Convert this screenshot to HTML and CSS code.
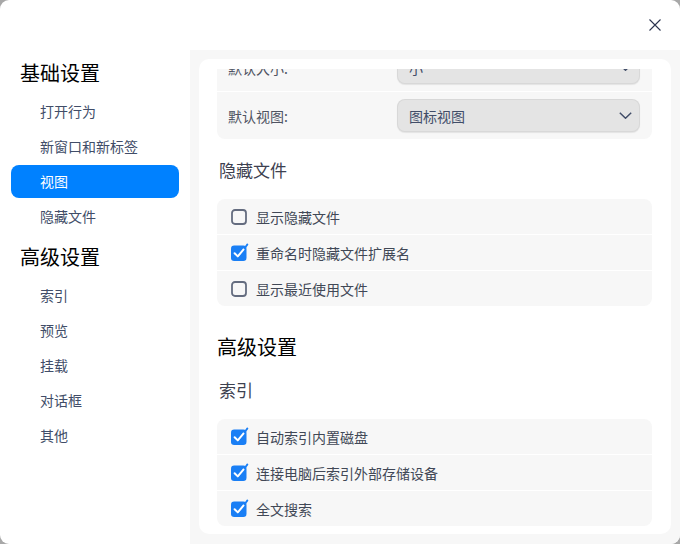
FILE: index.html
```html
<!DOCTYPE html>
<html lang="zh-CN">
<head>
<meta charset="utf-8">
<title>设置</title>
<link rel="stylesheet" href="styles.css">
</head>
<body>
<div class="window">
  <header class="titlebar">
    <button class="close" aria-label="关闭">
      <svg width="12" height="12" viewBox="0 0 12 12"><path d="M0.5 0.5 L11.5 11.5 M11.5 0.5 L0.5 11.5" stroke="#2c3550" stroke-width="1.1" fill="none"/></svg>
    </button>
  </header>
  <div class="main">
    <nav class="sidebar">
      <div class="nav-title">基础设置</div>
      <div class="nav-item">打开行为</div>
      <div class="nav-item">新窗口和新标签</div>
      <div class="nav-item active">视图</div>
      <div class="nav-item">隐藏文件</div>
      <div class="nav-title second">高级设置</div>
      <div class="nav-item">索引</div>
      <div class="nav-item">预览</div>
      <div class="nav-item">挂载</div>
      <div class="nav-item">对话框</div>
      <div class="nav-item">其他</div>
    </nav>
    <section class="panel">
      <div class="card">
        <div class="scroll">
          <div class="group first">
            <div class="row select-row">
              <span class="label">默认大小:</span>
              <div class="select"><span>小</span>
                <svg class="chev" width="13" height="7" viewBox="0 0 13 7"><path d="M0.8 0.8 L6.5 6.2 L12.2 0.8" stroke="#414d68" stroke-width="1.5" fill="none"/></svg>
              </div>
            </div>
            <div class="row select-row">
              <span class="label">默认视图:</span>
              <div class="select"><span>图标视图</span>
                <svg class="chev" width="13" height="7" viewBox="0 0 13 7"><path d="M0.8 0.8 L6.5 6.2 L12.2 0.8" stroke="#414d68" stroke-width="1.5" fill="none"/></svg>
              </div>
            </div>
          </div>

          <h3 class="sub-title">隐藏文件</h3>
          <div class="group">
            <div class="row check-row">
              <svg class="cb" width="16" height="16" viewBox="0 0 16 16"><rect x="1" y="1" width="14" height="14" rx="3" fill="none" stroke="#646c7f" stroke-width="1.8"/></svg>
              <span class="check-label">显示隐藏文件</span>
            </div>
            <div class="row check-row">
              <svg class="cb" width="16" height="16" viewBox="0 0 16 16"><rect x="0" y="0.5" width="15.5" height="15.5" rx="3.2" fill="#1a7ff5"/><path d="M3.6 8.2 L6.8 11.4 L12.6 4.4" stroke="#fff" stroke-width="2" fill="none" stroke-linecap="round" stroke-linejoin="round"/><path d="M13.6 3.2 L16.4 -0.6" stroke="#1a7ff5" stroke-width="1.8" stroke-linecap="round"/></svg>
              <span class="check-label">重命名时隐藏文件扩展名</span>
            </div>
            <div class="row check-row">
              <svg class="cb" width="16" height="16" viewBox="0 0 16 16"><rect x="1" y="1" width="14" height="14" rx="3" fill="none" stroke="#646c7f" stroke-width="1.8"/></svg>
              <span class="check-label">显示最近使用文件</span>
            </div>
          </div>

          <h2 class="section-title">高级设置</h2>
          <h3 class="sub-title">索引</h3>
          <div class="group">
            <div class="row check-row">
              <svg class="cb" width="16" height="16" viewBox="0 0 16 16"><rect x="0" y="0.5" width="15.5" height="15.5" rx="3.2" fill="#1a7ff5"/><path d="M3.6 8.2 L6.8 11.4 L12.6 4.4" stroke="#fff" stroke-width="2" fill="none" stroke-linecap="round" stroke-linejoin="round"/><path d="M13.6 3.2 L16.4 -0.6" stroke="#1a7ff5" stroke-width="1.8" stroke-linecap="round"/></svg>
              <span class="check-label">自动索引内置磁盘</span>
            </div>
            <div class="row check-row">
              <svg class="cb" width="16" height="16" viewBox="0 0 16 16"><rect x="0" y="0.5" width="15.5" height="15.5" rx="3.2" fill="#1a7ff5"/><path d="M3.6 8.2 L6.8 11.4 L12.6 4.4" stroke="#fff" stroke-width="2" fill="none" stroke-linecap="round" stroke-linejoin="round"/><path d="M13.6 3.2 L16.4 -0.6" stroke="#1a7ff5" stroke-width="1.8" stroke-linecap="round"/></svg>
              <span class="check-label">连接电脑后索引外部存储设备</span>
            </div>
            <div class="row check-row">
              <svg class="cb" width="16" height="16" viewBox="0 0 16 16"><rect x="0" y="0.5" width="15.5" height="15.5" rx="3.2" fill="#1a7ff5"/><path d="M3.6 8.2 L6.8 11.4 L12.6 4.4" stroke="#fff" stroke-width="2" fill="none" stroke-linecap="round" stroke-linejoin="round"/><path d="M13.6 3.2 L16.4 -0.6" stroke="#1a7ff5" stroke-width="1.8" stroke-linecap="round"/></svg>
              <span class="check-label">全文搜索</span>
            </div>
          </div>
        </div>
      </div>
    </section>
  </div>
</div>
</body>
</html>
```

FILE: styles.css
```css
* { box-sizing: border-box; }
html, body {
  margin: 0;
  padding: 0;
  background: #a8a8a8;
}
body {
  font-family: "Noto Sans CJK SC", "Noto Sans", sans-serif;
  width: 680px;
  height: 544px;
  overflow: hidden;
}
.window {
  width: 680px;
  height: 544px;
  background: #ffffff;
  border-radius: 9px;
  overflow: hidden;
  display: flex;
  flex-direction: column;
}
.titlebar {
  height: 50px;
  flex: none;
  display: flex;
  justify-content: flex-end;
  align-items: center;
}
.close {
  width: 50px;
  height: 50px;
  border: 0;
  background: transparent;
  padding: 0;
  display: flex;
  align-items: center;
  justify-content: center;
}
.main {
  flex: 1;
  display: flex;
  min-height: 0;
}
.sidebar {
  width: 190px;
  flex: none;
  padding: 9px 11px 0 11px;
  display: flex;
  flex-direction: column;
}
.nav-title {
  font-size: 20px;
  line-height: 28px;
  color: #000;
  padding-left: 9px;
  margin-bottom: 8px;
}
.nav-title.second { margin-top: 8px; }
.nav-item {
  height: 33px;
  margin-bottom: 2px;
  line-height: 33px;
  font-size: 14px;
  color: #414d68;
  padding-left: 29px;
  border-radius: 8px;
}
.nav-item.active {
  background: #0081ff;
  color: #ffffff;
}
.panel {
  flex: 1;
  background: #f7f7f7;
  padding: 9px 9px 10px 9px;
  display: flex;
  flex-direction: column;
  min-width: 0;
}
.card {
  flex: 1;
  background: #ffffff;
  border-radius: 10px;
  padding: 10px 19px 8px 18px;
  min-height: 0;
  display: flex;
  flex-direction: column;
}
.scroll {
  flex: 1;
  overflow: hidden;
  min-height: 0;
}
.group {
  display: flex;
  flex-direction: column;
  gap: 1px;
  border-radius: 8px;
  overflow: hidden;
}
.group.first { margin-top: -25px; }
.row {
  background: #f7f7f7;
  display: flex;
  align-items: center;
}
.select-row {
  height: 47px;
  padding: 0 12px 0 11px;
}
.label {
  flex: 1;
  font-size: 14px;
  color: #4f5462;
}
.select {
  width: 243px;
  height: 33px;
  background: #e4e4e4;
  border: 1px solid rgba(0, 0, 0, 0.05);
  border-radius: 8px;
  box-shadow: 0 1px 1px rgba(0, 0, 0, 0.08);
  display: flex;
  align-items: center;
  justify-content: space-between;
  padding: 0 7px 0 11px;
  font-size: 14px;
  color: #414d68;
}
.chev { margin-top: -1px; }
.check-row {
  height: 35px;
  padding-left: 14px;
}
.cb {
  flex: none;
  overflow: visible;
}
.check-label {
  margin-left: 9px;
  font-size: 14px;
  color: #414856;
}
.sub-title {
  margin: 19px 0 17px 2px;
  font-size: 17px;
  line-height: 24px;
  font-weight: normal;
  color: #3d4150;
}
.section-title {
  margin: 27px 0 0 0;
  font-size: 20px;
  line-height: 28px;
  font-weight: normal;
  color: #000;
}
.section-title + .sub-title { margin-top: 17px; }
```
